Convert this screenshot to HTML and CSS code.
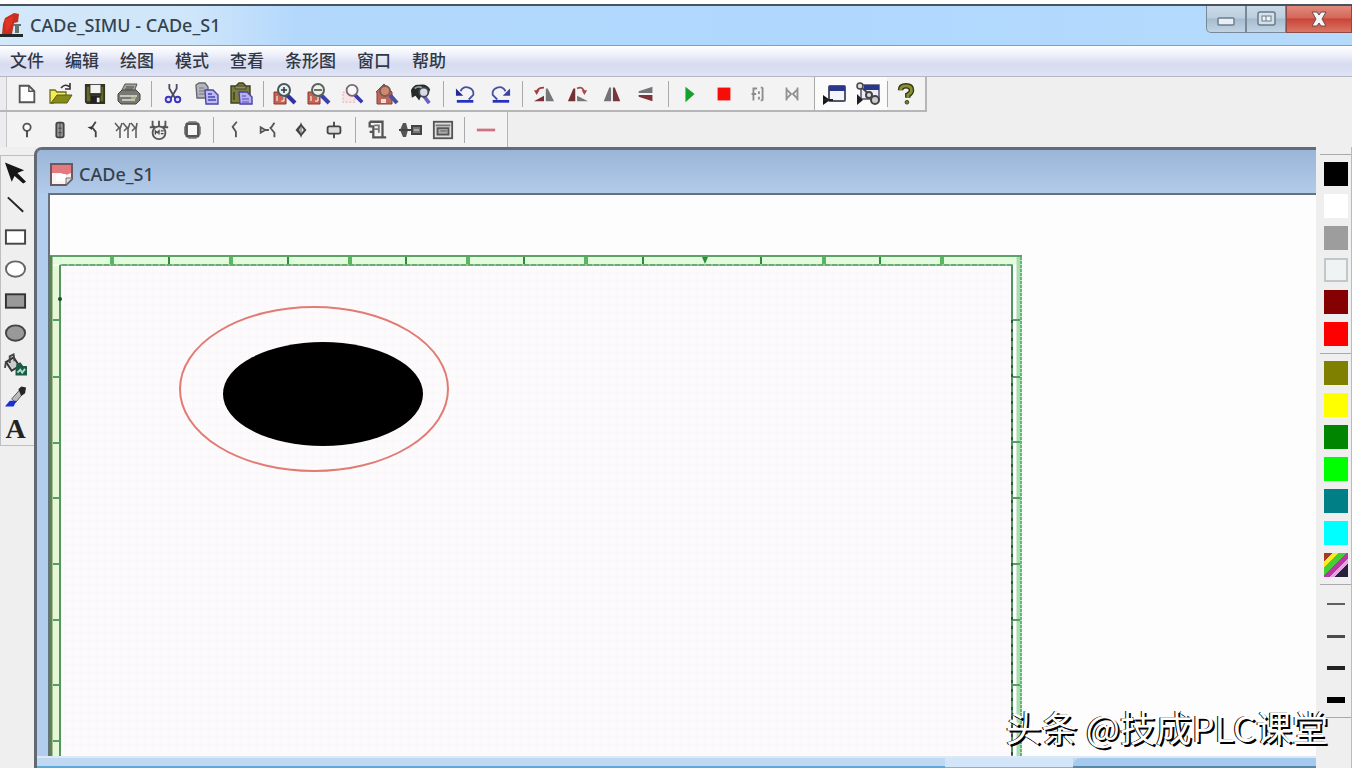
FILE: index.html
```html
<!DOCTYPE html>
<html lang="zh-CN">
<head>
<meta charset="utf-8">
<title>CADe_SIMU - CADe_S1</title>
<link rel="stylesheet" href="styles.css">
</head>
<body>
<div class="app">
  <header class="titlebar">
    <svg class="app-icon" viewBox="0 0 24 26"><path d="M2 22 3 12 5 6 14 1 19 2 18 10 14 11 12 22Z" fill="#c62f20"/><path d="M5 8 13 4 12 12 6 20Z" fill="#e23423"/><path d="M13 12h8v2h-8zM15 14h4v7h-4z" fill="#63746f"/><path d="M0 22h23v3H0z" fill="#202a28"/></svg>
    <h1 class="app-title">CADe_SIMU - CADe_S1</h1>
    <div class="win-controls">
      <button class="win-btn" aria-label="最小化"><svg viewBox="0 0 24 20"><rect x="4" y="9" width="16" height="7" rx="1" fill="#e9eff5" stroke="#6c7d8d" stroke-width="1.5"/></svg></button>
      <button class="win-btn" aria-label="还原"><svg viewBox="0 0 24 20"><rect x="4" y="3" width="17" height="13" rx="2" fill="#d5e0e9" stroke="#687b8b" stroke-width="1.5"/><rect x="8" y="7" width="9" height="5" fill="#eef3f7" stroke="#687b8b"/><path d="M12 7v5" stroke="#687b8b"/></svg></button>
      <button class="win-btn win-close" aria-label="关闭"><svg viewBox="0 0 24 20"><path d="M5 3h5l2 3 2-3h5l-4 7 4 7h-5l-2-3-2 3H5l4-7Z" fill="#f7f7f7" stroke="#6b4a4a"/></svg></button>
    </div>
  </header>

  <nav class="menu">
    <button>文件</button><button>编辑</button><button>绘图</button><button>模式</button><button>查看</button><button>条形图</button><button>窗口</button><button>帮助</button>
  </nav>

  <div class="bars">
    <div class="bar">
      <div class="group">
        <button aria-label="新建"><svg viewBox="0 0 24 24"><path d="M4 3h10l6 6v12H4Z" fill="#fff" stroke="#555" stroke-width="2"/><path d="M14 3v6h6" fill="none" stroke="#555" stroke-width="1.5"/></svg></button>
        <button aria-label="打开"><svg class="wide" viewBox="0 0 24 24"><path d="M1 8h5l2 2h9v4L4 21H1Z" fill="#f3ec58" stroke="#6b7014" stroke-width="1.3"/><path d="M2 21 8 13h15l-5 8Z" fill="#858a19" stroke="#5a5e12"/><path d="M12 6q4-5 9-1M21 1v6h-5" fill="none" stroke="#333" stroke-width="1.6"/></svg></button>
        <button aria-label="保存"><svg viewBox="0 0 24 24"><path d="M1 1h22v22H3l-2-2Z" fill="#333423"/><path d="M3 4h3v10h13V4h2v16H3z" fill="#66682a"/><path d="M7 2h11v9H7z" fill="#f2f3f5"/><path d="M7 14h11v8H7z" fill="#222"/><path d="M14 16h3v5h-3z" fill="#eee"/></svg></button>
        <button aria-label="打印"><svg class="wide" viewBox="0 0 24 24"><path d="M8 2h12l-3 8H4Z" fill="#a6a6a1" stroke="#555"/><path d="M9 5h8M8 7h8" stroke="#444"/><path d="M1 12l4-4h14l4 4v6l-4 4H4l-3-3Z" fill="#797974" stroke="#444"/><path d="M3 14h17M5 18h13" stroke="#ddd" stroke-width="1.4"/><path d="M14 15h5v2h-5z" fill="#b2aa55"/></svg></button>
      </div>
      <div class="group">
        <button aria-label="剪切"><svg viewBox="0 0 24 24"><path d="M8 1v5l6 10M16 1v5l-6 10" fill="none" stroke="#4a4d62" stroke-width="2"/><circle cx="7" cy="18" r="3" fill="#dedcff" stroke="#3c35b8" stroke-width="2"/><circle cx="17" cy="18" r="3" fill="#dedcff" stroke="#3c35b8" stroke-width="2"/></svg></button>
        <button aria-label="复制"><svg class="wide" viewBox="0 0 24 24"><path d="M1 3l3-2h6l3 4v11H2Z" fill="#b5b6bd" stroke="#66676f" stroke-width="1.4"/><path d="M4 6h5M4 9h6M4 12h6" stroke="#777"/><path d="M10 8h8l5 5v9H11Z" fill="#bdbbef" stroke="#4a46a8" stroke-width="1.4"/><path d="M13 12h4M13 15h7M13 18h8" stroke="#4a46b8" stroke-width="1.4"/></svg></button>
        <button aria-label="粘贴"><svg class="wide" viewBox="0 0 24 24"><path d="M2 4h5l3-3h4l3 3h4v17H2Z" fill="#7a7e39" stroke="#3e411f" stroke-width="1.4"/><path d="M6 4h11v3H6z" fill="#8f924f" stroke="#444"/><path d="M5 10v8" stroke="#4e5127" stroke-width="2"/><path d="M10 10h8l5 5v7H11Z" fill="#b5b1ec" stroke="#4a3fae" stroke-width="1.4"/><path d="M13 14h4M13 17h7M13 20h7" stroke="#5a4bc0"/></svg></button>
      </div>
      <div class="group">
        <button aria-label="放大"><svg class="wide" viewBox="0 0 24 24"><path d="M1 10h12v12H1z" fill="#c66454" stroke="#8e372c"/><path d="M4 14v5M8 14h3v5H8" stroke="#fff" fill="none"/><path d="M14 13l8 8" stroke="#2f329f" stroke-width="4"/><circle cx="11" cy="8" r="6" fill="#e4f1f1" stroke="#48575d" stroke-width="2"/><path d="M8 8h6M11 5v6" stroke="#333" stroke-width="1.5"/></svg></button>
        <button aria-label="缩小"><svg class="wide" viewBox="0 0 24 24"><path d="M1 10h12v12H1z" fill="#c66454" stroke="#8e372c"/><path d="M4 14v5M8 14h3v5H8" stroke="#fff" fill="none"/><path d="M14 13l8 8" stroke="#3a43ad" stroke-width="4"/><circle cx="11" cy="8" r="6" fill="#edf3e9" stroke="#56625d" stroke-width="2"/><path d="M7 8h8" stroke="#444" stroke-width="1.5"/></svg></button>
        <button aria-label="缩放窗口"><svg viewBox="0 0 24 24"><path d="M1 10h13v11H1z" fill="#f8e3e6" stroke="#dfa4ab" stroke-dasharray="2 2"/><path d="M14 13l8 8" stroke="#3b39a8" stroke-width="4"/><circle cx="11" cy="8" r="6" fill="#faf7fb" stroke="#766a73" stroke-width="2"/></svg></button>
        <button aria-label="全部显示"><svg class="wide" viewBox="0 0 24 24"><path d="M1 10l8-8 8 8v12H2V10Z" fill="#bd675a" stroke="#834137"/><path d="M15 13l7 8" stroke="#4a4da0" stroke-width="4"/><circle cx="10" cy="9" r="5" fill="#d28772" stroke="#765e51" stroke-width="2"/><path d="M6 17h5v4H6z" fill="#f4ddd6"/></svg></button>
        <button aria-label="查找"><svg viewBox="0 0 24 24"><path d="M1 8q3-7 9-6 8-2 12 5l-2 5-6-2-4 9-4-5-4 2Z" fill="#252b28"/><path d="M15 14l6 8" stroke="#6663c5" stroke-width="4"/><circle cx="15" cy="10" r="5" fill="#dadbe5" stroke="#454554" stroke-width="2"/><path d="M5 6q4-3 8-1" fill="none" stroke="#8ea09a" stroke-width="2"/></svg></button>
      </div>
      <div class="group roomy">
        <button aria-label="撤销"><svg viewBox="0 0 24 24"><path d="M6 9q3-6 9-4 6 2 5 8l-5 5" fill="none" stroke="#4751a0" stroke-width="2"/><path d="M1 6v8h8Z" fill="#222b8b"/><path d="M2 20h18" stroke="#2831bd" stroke-width="3"/></svg></button>
        <button aria-label="重做"><svg viewBox="0 0 24 24"><path d="M18 9q-3-6-9-4-6 2-5 8l5 5" fill="none" stroke="#4751a0" stroke-width="2"/><path d="M23 6v8h-8Z" fill="#3a43a5"/><path d="M4 20h18" stroke="#2831bd" stroke-width="3"/></svg></button>
      </div>
      <div class="group">
        <button aria-label="向左旋转"><svg viewBox="0 0 24 24"><path d="M1 20l11-6v6Z" fill="#7b2e33"/><path d="M14 20V6h2l7 14Z" fill="#77777b"/><path d="M4 10q1-5 8-5" fill="none" stroke="#a33d3f" stroke-width="2"/><path d="M1 8h6l-3 5Z" fill="#a33d3f"/></svg></button>
        <button aria-label="向右旋转"><svg viewBox="0 0 24 24"><path d="M23 20l-12-6v6Z" fill="#77777b"/><path d="M1 20 7 6h2v14Z" fill="#713135"/><path d="M11 6q6-3 8 4" fill="none" stroke="#a34b4d" stroke-width="2"/><path d="M22 8h-6l3 5Z" fill="#a34b4d"/></svg></button>
        <button aria-label="水平翻转"><svg viewBox="0 0 24 24"><path d="M3 20 9 5h2v15Z" fill="#737276"/><path d="M13 20V5h2l6 15Z" fill="#76363b"/></svg></button>
        <button aria-label="垂直翻转"><svg viewBox="0 0 24 24"><path d="M19 4v7H4V9Z" fill="#777579"/><path d="M19 20v-7H4v2Z" fill="#7d3339"/></svg></button>
      </div>
      <div class="group">
        <button aria-label="运行"><svg viewBox="0 0 24 24"><path d="M7 4l10 8-10 9Z" fill="#13a32c"/></svg></button>
        <button aria-label="停止"><svg viewBox="0 0 24 24"><path d="M5 5h14v14H5z" fill="#f70d08"/></svg></button>
        <button aria-label="单步"><svg viewBox="0 0 24 24"><path d="M7 5v14M7 6h4M5 12h5M13 9v3M13 15v3M17 5v14M15 5h2M15 19h2" fill="none" stroke="#8b8b8b" stroke-width="2"/></svg></button>
        <button aria-label="连接"><svg viewBox="0 0 24 24"><path d="M6 5v14M18 5v14M6 7l5 5-5 5M18 7l-5 5 5 5" fill="none" stroke="#929292" stroke-width="2"/></svg></button>
      </div>
      <div class="group checked">
        <button aria-label="显示窗口"><svg class="wide" viewBox="0 0 24 24"><rect x="7" y="4" width="16" height="15" rx="1" fill="#f4f5fb" stroke="#52586a" stroke-width="2"/><path d="M7 4h16v5H7z" fill="#2a378d"/><path d="M1 13l7 5-7 5Z" fill="#151515"/><path d="M1 18h10" stroke="#222" stroke-width="2"/></svg></button>
        <button aria-label="窗口连接"><svg class="wide" viewBox="0 0 24 24"><rect x="5" y="3" width="18" height="14" fill="#eceef6" stroke="#4c5370" stroke-width="1.5"/><path d="M8 3h15v5H8z" fill="#2a378d"/><circle cx="4" cy="4" r="3" fill="#ddd" stroke="#454545" stroke-width="1.5"/><path d="M6 6l7 6" stroke="#454545" stroke-width="2"/><circle cx="13" cy="13" r="3" fill="#ddd" stroke="#454545" stroke-width="2"/><circle cx="19" cy="18" r="4" fill="#ccc" stroke="#454545" stroke-width="2"/><path d="M1 12l6 6-6 5Z" fill="#202020"/></svg></button>
      </div>
      <div class="group">
        <button aria-label="关于"><svg viewBox="0 0 24 24"><path d="M6 8q0-5 6-5 6 0 6 5 0 3-4 5v3" fill="none" stroke="#333817" stroke-width="6"/><path d="M6 8q0-5 6-5 6 0 6 5 0 3-4 5v3" fill="none" stroke="#8a902c" stroke-width="3"/><circle cx="13" cy="21" r="2" fill="#7b8126" stroke="#333817"/></svg></button>
      </div>
    </div>

    <div class="bar bar-parts">
      <div class="group">
        <button aria-label="电源"><svg viewBox="0 0 24 24"><circle cx="12" cy="9" r="4" fill="#fff" stroke="#555" stroke-width="2"/><path d="M12 13v7" stroke="#444" stroke-width="2"/></svg></button>
        <button aria-label="熔断器"><svg viewBox="0 0 24 24"><rect x="8" y="4" width="8" height="16" rx="2" fill="#999" stroke="#444" stroke-width="2"/><path d="M12 3v18M10 10h4M10 15h4" stroke="#444"/></svg></button>
        <button aria-label="断路器"><svg viewBox="0 0 24 24"><path d="M15 3l-4 6M11 9l4 5v6" fill="none" stroke="#444" stroke-width="2"/><path d="M6 9l5-1v4Z" fill="#333"/></svg></button>
        <button aria-label="三极开关"><svg class="wide" viewBox="0 0 24 24"><path d="M1 5l5 6v9M9 5l5 6v9M17 5l5 6v9M6 11l2-6M14 11l2-6M22 11l1-6M2 13l4-4M10 13l4-4M18 13l4-4" fill="none" stroke="#606060" stroke-width="1.6"/></svg></button>
        <button aria-label="电动机"><svg viewBox="0 0 24 24"><path d="M5 2v5l4 3M12 2v7M19 2v5l-4 3M2 9h6M16 9h6" fill="none" stroke="#555" stroke-width="2"/><circle cx="12" cy="15" r="7" fill="#eee" stroke="#555" stroke-width="2"/><path d="M8 17v-4l2 2 2-2v4M14 13h3M14 16h3" fill="none" stroke="#444" stroke-width="1.4"/></svg></button>
        <button aria-label="元件"><svg viewBox="0 0 24 24"><rect x="6" y="5" width="13" height="14" rx="2" fill="#f6f6f6" stroke="#555" stroke-width="3"/><path d="M8 3h9M8 21h9M4 8v9M21 8v9" stroke="#666"/></svg></button>
      </div>
      <div class="group">
        <button aria-label="触点"><svg viewBox="0 0 24 24"><path d="M14 3l-5 6M9 8l4 6v6" fill="none" stroke="#555" stroke-width="2"/></svg></button>
        <button aria-label="按钮触点"><svg viewBox="0 0 24 24"><path d="M19 4l-4 6M14 9l5 6v5M4 9l5 3-5 3ZM9 12h4" fill="none" stroke="#555" stroke-width="2"/></svg></button>
        <button aria-label="指示器"><svg viewBox="0 0 24 24"><path d="M12 5l6 7-6 7-6-7Z" fill="#444"/><path d="M12 8l3 4-3 4-2-4Z" fill="#eee"/><path d="M12 4v16" stroke="#444"/></svg></button>
        <button aria-label="线圈"><svg viewBox="0 0 24 24"><path d="M12 3v18" stroke="#444" stroke-width="2"/><rect x="5" y="8" width="14" height="8" rx="2" fill="#ddd" stroke="#444" stroke-width="2"/></svg></button>
      </div>
      <div class="group">
        <button aria-label="控制器"><svg viewBox="0 0 24 24"><path d="M4 3h14v17h4M18 20H8v-6H4M4 3v5h4v6" fill="none" stroke="#555" stroke-width="2.5"/><path d="M9 7h5v8M9 11h4" fill="none" stroke="#777" stroke-width="2"/></svg></button>
        <button aria-label="传感器"><svg class="wide" viewBox="0 0 24 24"><path d="M5 5h3l2 7-2 7H5l-3-7Z" fill="#555"/><path d="M1 12h13" stroke="#444" stroke-width="2"/><rect x="14" y="8" width="9" height="8" fill="#777" stroke="#444" stroke-width="2"/><path d="M16 12h5" stroke="#ddd"/></svg></button>
        <button aria-label="模块"><svg viewBox="0 0 24 24"><rect x="2" y="3" width="20" height="18" fill="#ddd" stroke="#555" stroke-width="2"/><path d="M4 7h16" stroke="#777" stroke-width="2"/><rect x="6" y="10" width="12" height="7" fill="#aaa" stroke="#555" stroke-width="2"/><path d="M9 13h7" stroke="#555"/></svg></button>
      </div>
      <div class="group">
        <button aria-label="导线"><svg viewBox="0 0 24 24"><path d="M2 12h20" stroke="#cc7480" stroke-width="3"/></svg></button>
      </div>
    </div>
  </div>

  <div class="work">
    <aside class="tools">
      <button aria-label="选择"><svg viewBox="0 0 24 24"><path d="M1 1l20 8-7 3 9 9-3 2-9-8-3 6Z" fill="#161616"/></svg></button>
      <button aria-label="直线"><svg viewBox="0 0 24 24"><path d="M4 4l16 15" stroke="#222" stroke-width="2"/></svg></button>
      <button aria-label="矩形"><svg viewBox="0 0 24 24"><rect x="2" y="5" width="20" height="14" fill="#fff" stroke="#444" stroke-width="2"/></svg></button>
      <button aria-label="椭圆"><svg viewBox="0 0 24 24"><ellipse cx="12" cy="12" rx="10" ry="8" fill="#fff" stroke="#666" stroke-width="2"/></svg></button>
      <button aria-label="实心矩形"><svg viewBox="0 0 24 24"><rect x="2" y="5" width="20" height="14" fill="#999" stroke="#333" stroke-width="2"/></svg></button>
      <button aria-label="实心椭圆"><svg viewBox="0 0 24 24"><ellipse cx="12" cy="12" rx="10" ry="8" fill="#999" stroke="#444" stroke-width="2"/></svg></button>
      <button aria-label="填充"><svg viewBox="0 0 24 24"><path d="M2 9l8-5 6 9-8 5Z" fill="#ccc" stroke="#333" stroke-width="2"/><path d="M6 10V3l4-2 1 7M2 9l-1 6" fill="none" stroke="#444" stroke-width="2"/><path d="M13 11l4-2 3 4h4v10H12v-5Z" fill="#1e5b47"/><path d="M14 20l3-3 2 3 3-4" fill="none" stroke="#a5e0ca" stroke-width="2"/></svg></button>
      <button aria-label="取色"><svg viewBox="0 0 24 24"><path d="M8 14l8-9 4 3-8 10Z" fill="#bbb" stroke="#555"/><path d="M15 4l3-3 5 1-1 6-4 3Z" fill="#252525"/><path d="M1 22l5-6h7l-3 6Z" fill="#1930d2"/></svg></button>
      <button class="text-tool" aria-label="文字">A</button>
    </aside>

    <main class="doc">
      <div class="doc-title">
        <svg class="doc-icon" viewBox="0 0 24 24"><path d="M2 2h21v15l-6 6H2Z" fill="#f7f4f4" stroke="#6b5960" stroke-width="2"/><path d="M3 3h19v8l-5 2-5-2H3Z" fill="#e47980"/><path d="M7 12h10v7H7Z" fill="#fff"/><path d="M17 22v-6h6" fill="#ddd" stroke="#77707a"/></svg>
        <h2>CADe_S1</h2>
      </div>
      <div class="canvas">
        <svg class="drawing" role="img" aria-label="图纸">
          <defs>
            <pattern id="grid" width="8" height="8" patternUnits="userSpaceOnUse"><path d="M0 0h8M0 0v8" stroke="#f7f5f9" fill="none"/></pattern>
          </defs>
          <g transform="translate(-50 -195)">
            <rect x="60" y="265" width="953" height="500" fill="#fcfafb"/>
            <rect x="60" y="265" width="953" height="500" fill="url(#grid)"/>
            <path d="M52 261h969" stroke="#e2fbdc" stroke-width="7"/>
            <path d="M56 266v499" stroke="#e6f7d5" stroke-width="7"/>
            <path d="M1019 257v508" stroke="#a9dcb0" stroke-width="5"/>
            <path d="M50 256h972" stroke="#5fa266" stroke-width="2"/>
            <path d="M60 265h953" stroke="#69ab72" stroke-width="2"/>
            <path d="M60 265h953" stroke="#b9dfbd" stroke-dasharray="2 5"/>
            <path d="M51 256v509" stroke="#5c8650" stroke-width="3"/>
            <path d="M60 265v500" stroke="#529663" stroke-width="2"/>
            <path d="M1012 265v500" stroke="#4f9560" stroke-width="2"/>
            <path d="M1012 320v445" stroke="#35523c" stroke-width="2" stroke-dasharray="3 6"/>
            <path d="M1021 257v508" stroke="#67b474" stroke-width="2" stroke-dasharray="3 1"/>
            <path d="M169 257v7M288 257v7M406 257v7M524 257v7M643 257v7M761 257v7M880 257v7" stroke="#269232" stroke-width="2"/>
            <path d="M112 257v7M231 257v7M350 257v7M468 257v7M586 257v7M824 257v7M942 257v7" stroke="#55b95d" stroke-width="4"/>
            <path d="M702 257h6l-3 7Z" fill="#269232"/>
            <path d="M53 320h6M53 377h6M53 443h6M53 498h6M53 564h6M53 620h6M53 685h6M53 741h6M1013 320h7M1013 377h7M1013 442h7M1013 498h7M1013 564h7M1013 620h7M1013 685h7" stroke="#52a062" stroke-width="2"/>
            <circle cx="60" cy="299" r="2" fill="#174c2a"/>
            <ellipse cx="314" cy="389" rx="134" ry="82" fill="none" stroke="#e17b73" stroke-width="2"/>
            <ellipse cx="323" cy="394" rx="100" ry="52" fill="#000"/>
          </g>
        </svg>
      </div>
      <div class="doc-foot"><span class="foot-a"></span><span class="foot-b"></span><span class="foot-c"></span></div>
    </main>

    <aside class="palette">
      <div class="swatches">
        <button class="black" aria-label="黑色"></button><button class="white" aria-label="白色"></button><button class="gray" aria-label="灰色"></button><button class="light" aria-label="浅灰"></button><button class="maroon" aria-label="深红"></button><button class="red" aria-label="红色"></button>
      </div>
      <div class="swatches">
        <button class="olive" aria-label="橄榄"></button><button class="yellow" aria-label="黄色"></button><button class="green" aria-label="绿色"></button><button class="lime" aria-label="亮绿"></button><button class="teal" aria-label="蓝绿"></button><button class="cyan" aria-label="青色"></button><button class="multi" aria-label="更多颜色"></button>
      </div>
      <div class="widths">
        <button aria-label="线宽 1"><span class="w1"></span></button><button aria-label="线宽 2"><span class="w2"></span></button><button aria-label="线宽 3"><span class="w3"></span></button><button aria-label="线宽 4"><span class="w4"></span></button>
      </div>
    </aside>
  </div>
  <p class="watermark">头条 @技成PLC课堂</p>
</div>
</body>
</html>
```
FILE: styles.css
```css
* { box-sizing: border-box; }
body { margin: 0; font-family: "Noto Sans", "Noto Sans CJK SC", sans-serif; color: #27333f; background: #fff; }
button { appearance: none; border: 0; padding: 0; margin: 0; background: none; font: inherit; color: inherit; display: flex; align-items: center; justify-content: center; }
h1, h2, p { margin: 0; font-weight: 500; }
.app { position: relative; display: flex; flex-direction: column; height: 100vh; padding-top: 4px; overflow: hidden; }

.titlebar { display: flex; flex: none; height: 42px; border-top: 2px solid #47535f; border-bottom: 1px solid #8f9dab; background: linear-gradient(90deg, #d3e8f9 0, #cfe6fa 14%, #b3d8fc 22%, #b0d8ff 60%, #b5dafb 100%); }
.app-icon { width: 24px; height: 26px; margin-top: 6px; }
.app-title { flex: 1; padding-left: 6px; font-size: 18px; line-height: 38px; color: #34434f; }
.win-controls { display: flex; height: 27px; }
.win-btn { width: 40px; border: 1px solid #76899b; border-top: 0; background: linear-gradient(#cbdae7, #bdcfdf 45%, #a6bccf 50%, #c1d4e4); }
.win-btn:first-child { border-radius: 0 0 0 5px; }
.win-btn svg { width: 24px; height: 20px; }
.win-close { width: 66px; border-color: #8e4a47; background: linear-gradient(#e08a7c, #d4685a 45%, #c84538 50%, #dc7565); }

.menu { display: flex; flex: none; gap: 21px; height: 31px; padding: 0 10px; align-items: center; border-bottom: 1px solid #b4b6c1; background: linear-gradient(#fff 0, #f1f3fb 25%, #d6dbf0 60%, #dfe3f5 100%); }
.menu button { font-size: 17px; line-height: 24px; color: #303845; white-space: nowrap; font-weight: 500; }

.bars { flex: none; background: #f0eff0; }
.bar { display: flex; width: max-content; height: 35px; padding-left: 5px; border-right: 2px solid #b6b6b8; border-bottom: 2px solid #b6b6b8; box-shadow: inset 6px 0 #ececee, inset 7px 0 #c4c4c8; background-color: #f4f3f4; }
.bar-parts { border-bottom: 0; border-right-width: 1px; }
.group { display: flex; padding: 0 5px; align-items: center; }
.group + .group { background: linear-gradient(#a9a9ac, #a9a9ac) left center / 1px 26px no-repeat; }
.group button { width: 34px; height: 32px; }
.bar-parts .group button { width: 33px; }
.group svg { width: 22px; height: 22px; }
.group svg.wide { width: 26px; height: 24px; }
.group.roomy { padding-left: 6px; }
.bar .group.checked { padding: 0 2px; border-left: 1px solid #a9a9ac; align-self: stretch; background: #fbfbfc; }
.checked + .group { padding: 0 2px; }

.work { display: flex; flex: 1; min-height: 0; background: #f0eff0; }
.tools { width: 34px; flex: none; align-self: flex-start; margin-top: 8px; padding-top: 1px; border: 1px solid #bfbfc2; border-width: 1px 0 1px 1px; }
.tools button { width: 29px; height: 32px; }
.tools svg { width: 23px; height: 24px; }
.tools .text-tool { font: 700 28px/32px "Liberation Serif", serif; color: #222; }
.doc { display: flex; flex: 1; min-width: 0; flex-direction: column; border-left: 3px solid #626973; border-top: 3px solid #626b78; border-radius: 8px 0 0; padding-left: 11px; background: #b3cdec; }
.doc-title { display: flex; flex: none; height: 43px; align-items: center; gap: 6px; margin-left: -11px; padding: 4px 0 0 12px; border-radius: 5px 0 0; background: linear-gradient(#9ab5d8, #a4bedf 40%, #b2cbe9); }
.doc-icon { width: 24px; height: 24px; }
.doc h2 { font-size: 18px; line-height: 24px; color: #34414d; }
.canvas { flex: 1; min-height: 0; border: 2px solid #66717d; border-width: 2px 0 0 2px; background: #fdfdfd; }
.drawing { display: block; width: 100%; height: 100%; overflow: hidden; }
.doc-foot { display: flex; flex: none; height: 12px; margin-left: -11px; border-top: 2px solid #dbe9f7; background: #c0d8f1; }
.foot-a { flex: 71; border-bottom: 2px solid #5ca9db; }
.foot-b { flex: 10; background: #d3e5f8; border-bottom: 1px solid #7fb2da; }
.foot-c { flex: 19; background: #a5caee; border-bottom: 2px solid #5688ae; border-radius: 8px 0 0; }

.palette { width: 36px; flex: none; padding: 7px 0 0 4px; border-right: 1px solid #bbb; }
.swatches, .widths { display: flex; flex-direction: column; align-items: center; gap: 8px; padding: 7px 0; border-top: 1px solid #aaa; }
.swatches button { width: 24px; height: 24px; }
.black { background: #000; }
.swatches .white { background: #fff; }
.gray { background: #9d9d9d; }
.swatches .light { background: #eff3f4; border: 2px solid #c2c8ca; }
.maroon { background: #850000; }
.red { background: #fe0000; }
.olive { background: #808000; }
.yellow { background: #ff0; }
.green { background: #008500; }
.lime { background: #0f0; }
.teal { background: #008086; }
.cyan { background: #0ff; }
.multi { background: linear-gradient(135deg, #a53a20 0 18%, #f4ed26 18% 30%, #46ce39 30% 47%, #bb36a6 47% 62%, #e5a4dd 62% 72%, #252339 72%); }
.widths { gap: 0; padding: 3px 0 1px; border-bottom: 1px solid #aaa; }
.widths button { width: 30px; height: 32px; }
.widths span { display: block; width: 18px; background: #222; }
.w1 { height: 2px; opacity: .7; }
.w2 { height: 3px; opacity: .8; }
.w3 { height: 4px; }
.widths .w4 { height: 6px; background: #000; }

.watermark { position: absolute; right: 24px; bottom: 18px; font: 400 36px/48px "Noto Sans CJK SC", sans-serif; color: #fff; text-shadow: 2px 2px 0 #000, -1px 0 0 #000; white-space: nowrap; }
```
